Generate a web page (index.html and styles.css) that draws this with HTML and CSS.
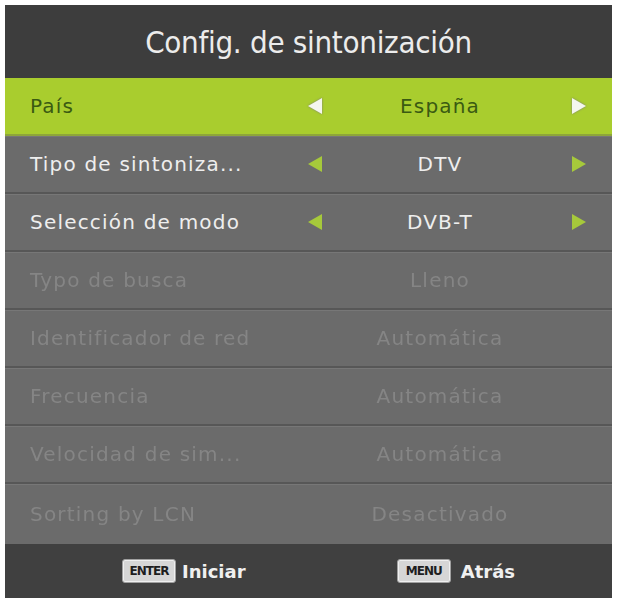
FILE: index.html
```html
<!DOCTYPE html>
<html lang="es">
<head>
  <meta charset="UTF-8" />
  <meta name="viewport" content="width=device-width, initial-scale=1.0"/>
  <title>Config. de sintonización</title>
  <link rel="stylesheet" href="styles.css">
</head>
<body>
  <div class="panel">
    <h1 class="title">Config. de sintonización</h1>

    <ul class="rows">
      <li class="row active">
        <span class="label">País</span>
        <span class="arrow left"></span>
        <span class="value">España</span>
        <span class="arrow right"></span>
      </li>
      <li class="row">
        <span class="label">Tipo de sintoniza...</span>
        <span class="arrow left"></span>
        <span class="value">DTV</span>
        <span class="arrow right"></span>
      </li>
      <li class="row">
        <span class="label">Selección de modo</span>
        <span class="arrow left"></span>
        <span class="value">DVB-T</span>
        <span class="arrow right"></span>
      </li>
      <li class="row disabled">
        <span class="label">Typo de busca</span>
        <span class="value">Lleno</span>
      </li>
      <li class="row disabled">
        <span class="label">Identificador de red</span>
        <span class="value">Automática</span>
      </li>
      <li class="row disabled">
        <span class="label">Frecuencia</span>
        <span class="value">Automática</span>
      </li>
      <li class="row disabled">
        <span class="label">Velocidad de sim...</span>
        <span class="value">Automática</span>
      </li>
      <li class="row disabled">
        <span class="label">Sorting by LCN</span>
        <span class="value">Desactivado</span>
      </li>
    </ul>

    <div class="footer">
      <div class="hint"><span class="key">ENTER</span>Iniciar</div>
      <div class="hint"><span class="key">MENU</span>Atrás</div>
    </div>
  </div>
</body>
</html>
```

FILE: styles.css
```css
body {
  margin: 0;
  background: #ffffff;
  font-family: "DejaVu Sans", sans-serif;
}

.panel {
  margin: 5px;
  width: 607px;
  height: 593px;
  display: flex;
  flex-direction: column;
  background: #6b6b6b;
}

.title {
  margin: 0;
  height: 73px;
  display: flex;
  align-items: center;
  justify-content: center;
  background: #3d3d3d;
  color: #ececec;
  font-family: "DejaVu Sans Condensed", "DejaVu Sans", sans-serif;
  font-stretch: condensed;
  font-weight: normal;
  font-size: 31px;
  letter-spacing: -0.3px;
}

.rows {
  list-style: none;
  margin: 0;
  padding: 0;
}

.row {
  height: 56px;
  display: grid;
  grid-template-columns: 272px 26px 224px 1fr;
  align-items: center;
  padding: 0 26px 0 25px;
  border-bottom: 2px solid #575757;
  box-shadow: inset 0 1px 0 #777777;
  color: #eeeeee;
  font-size: 20px;
  letter-spacing: 1.2px;
}

.row .label {
  white-space: nowrap;
}

.row .value {
  grid-column: 3;
  text-align: center;
}

.arrow {
  width: 0;
  height: 0;
  border-top: 8px solid transparent;
  border-bottom: 8px solid transparent;
  justify-self: center;
}

.arrow.left {
  border-right: 14px solid #a6c93b;
}

.arrow.right {
  border-left: 14px solid #a6c93b;
  justify-self: end;
}

.row.active {
  background: #a9cd2e;
  color: #3a5a12;
  box-shadow: none;
  border-bottom-color: #8ea63a;
}

.row.active .arrow.left {
  border-right-color: #f4f6ee;
  filter: drop-shadow(0 0 1px #7a7a7a);
}

.row.active .arrow.right {
  border-left-color: #f4f6ee;
  filter: drop-shadow(0 0 1px #7a7a7a);
}

.row.disabled {
  color: #858585;
}

.row.disabled span {
  filter: blur(0.5px);
}

.row:last-child {
  border-bottom: none;
  height: 60px;
}

.footer {
  flex: 1;
  display: flex;
  align-items: center;
  justify-content: space-between;
  padding: 0 97px 0 117px;
  background: #404040;
  color: #f0f0f0;
  font-weight: bold;
  font-size: 18px;
}

.hint {
  display: flex;
  align-items: center;
  gap: 6px;
}

/* remote-control key caps */
.key {
  width: 54px;
  height: 24px;
  box-sizing: border-box;
  display: flex;
  align-items: center;
  justify-content: center;
  background: #d6d6d6;
  color: #1e1e1e;
  font-family: "DejaVu Sans", sans-serif;
  font-weight: bold;
  font-size: 12px;
  letter-spacing: -1px;
  border-radius: 3px;
  border: 1px solid #a0a0a0;
  box-shadow: inset 0 0 0 1px #efefef;
}

.hint:last-child {
  gap: 10px;
}
```
